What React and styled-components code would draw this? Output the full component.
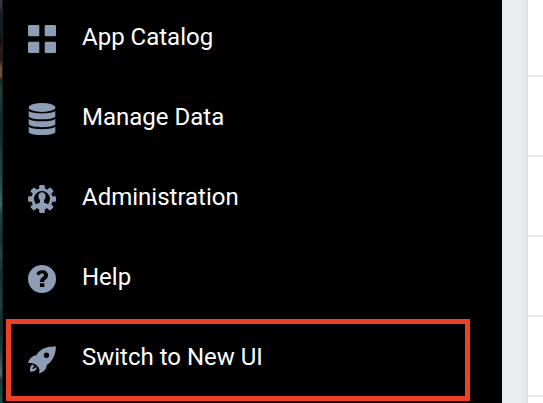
import React from "react";
import styled, { createGlobalStyle } from "styled-components";

const GlobalStyle = createGlobalStyle`
  body { margin: 0; overflow: hidden; background: #fff; }
  * { box-sizing: border-box; }
`;

const Screen = styled.div`
  display: grid;
  grid-template-columns: 3px 499px 26px 1fr;
  width: 543px;
  height: 403px;
  overflow: hidden;
`;

const Backdrop = styled.div`
  border-right: 1px solid #1c1f20;
  background: linear-gradient(
    180deg,
    #34363c 0, #34363c 5px, #101c28 14px, #141c24 32px, #100b0b 42px,
    #391a14 48px, #2a1410 60px, #6b4a36 67px, #70503a 76px, #16231f 80px,
    #1c4034 88px, #17373a 105px, #0d2731 125px, #122f3a 142px, #1b4646 165px,
    #1a4b44 180px, #3b6864 204px, #18463f 214px, #12343a 240px, #1a484a 256px,
    #102e34 276px, #194543 300px, #0d292b 326px, #153c3d 348px, #576b6c 374px,
    #143a3c 380px, #1b5452 403px
  );
`;

const Sidebar = styled.nav`
  display: flex;
  flex-direction: column;
  background: #000;
  overflow: hidden;
`;

const Label = styled.span`
  padding-bottom: 4px;
  white-space: nowrap;
`;

const MenuItem = styled.a`
  display: grid;
  grid-template-columns: 28px 1fr;
  column-gap: 26px;
  align-items: center;
  flex: 0 0 80px;
  padding-left: 25px;
  color: #fff;
  font: 400 24px/28px Roboto, sans-serif;

  &:first-child { margin-top: -1px; }
`;

const Highlighted = styled.div`
  display: flex;
  flex-direction: column;
  flex: 0 0 82px;
  width: 464px;
  margin-left: 3px;
  border: 5px solid #ec4127;

  ${MenuItem} {
    flex-basis: 72px;
    margin: 0;
    padding-left: 17px;
  }

  ${Label} {
    padding-bottom: 6px;
  }
`;

const Icon = styled.svg`
  display: block;
  width: 28px;
  height: 34px;
  fill: #8d9db5;
`;

const Gutter = styled.div`
  background: linear-gradient(90deg, #e9edf0 0, #e9edf0 18px, #e3e7ea 23px, #d9dde0 26px);
`;

const Table = styled.div`
  display: flex;
  flex-direction: column;
  margin-top: -3px;
  background: #fff;
`;

const TableRow = styled.div`
  flex: 0 0 80px;
  border-bottom: 2px solid #e9ecef;
`;

const CatalogIcon = () => (
  <Icon viewBox="0 -3 28 34">
    <rect width="11.3" height="11.3" rx="1.2" />
    <rect x="16.7" width="11.3" height="11.3" rx="1.2" />
    <rect y="16.7" width="11.3" height="11.3" rx="1.2" />
    <rect x="16.7" y="16.7" width="11.3" height="11.3" rx="1.2" />
  </Icon>
);

const layers = [6, 13.9, 21.8];

const DatabaseIcon = () => (
  <Icon viewBox="0 -3 28 34">
    <ellipse cx="14" cy="2.4" rx="13.3" ry="4.5" />
    {layers.map((y) => (
      <path
        key={y}
        d={`M.7 ${y}C4 ${y + 3.2} 24 ${y + 3.2} 27.3 ${y}V${y + 5.4}C24.5 ${y + 9.2} 3.5 ${y + 9.2} .7 ${y + 5.4}Z`}
      />
    ))}
  </Icon>
);

const teeth = [0, 45, 90, 135, 180, 225, 270, 315];

const AdminIcon = () => (
  <Icon viewBox="0 -3 28 34">
    {teeth.map((a) => (
      <path key={a} d="M11.2 5V1.2Q11.2 0 12.4 0h3.2q1.2 0 1.2 1.2V5Z" transform={`rotate(${a} 14 14)`} />
    ))}
    <path
      fillRule="evenodd"
      d="M14 3.3a10.7 10.7 0 1 0 0 21.4 10.7 10.7 0 0 0 0-21.4ZM12 15v2.6L7.9 19.2a8 8 0 1 1 12.2 0L16 17.6V15c2.9-2.3 1.8-7.7-2-7.7s-4.9 5.4-2 7.7Z"
    />
  </Icon>
);

const HelpIcon = () => (
  <Icon viewBox="0 -3 28 34">
    <path
      fillRule="evenodd"
      d="M14 0a14 14 0 1 0 0 28 14 14 0 0 0 0-28ZM8.2 8.7C9.8 6.3 11.7 5.3 14.3 5.3c3.3 0 5.7 2.1 5.7 5 0 2.4-1.2 3.5-2.5 4.5-.9.7-1.4 1-1.4 2v.3h-4v-.6c0-2.5 1.2-3.5 2.4-4.4 1-.7 1.4-1.1 1.4-1.9 0-1-.8-1.6-1.9-1.6-1.3 0-2 .6-3.1 1.8ZM11.9 18.3h4.4v3.8h-4.4Z"
    />
  </Icon>
);

const RocketIcon = () => (
  <Icon viewBox="0 -3 28 34">
    <path
      fillRule="evenodd"
      d="M28 .5C21.6.2 16.1 1.4 12.1 4.7c-1.6 1.3-2.8 2.8-3.8 4.6-2.5.3-4.2 1.1-5.5 2.8C1.4 13.7.3 15.4 0 17.2c2.1-.6 4.6-.2 6.7.7 1.7.9 3.2 2.4 4.1 4.1.9 1.8.9 3.6 0 5.4 2.2-.3 4-1.3 5.5-2.8 1.5-1.5 2.3-3 2.5-5.6 2.5-1.6 4.4-3.7 6-6.5C27 9 27.8 4.7 28 .5ZM18.5 6.5a2.7 2.7 0 1 0 0 5.4 2.7 2.7 0 0 0 0-5.4Z"
    />
    <path d="M4.3 18.4C2.2 19.6 1.7 22 2.1 25.8c3.5.1 5.8-.9 6.6-3.3l-1.2-1.5-1.3 1.5c-.5.6-1.2.7-1.8.7 0-.8.1-1.5.7-2l1.3-1.2Z" />
  </Icon>
);

const items = [
  { label: "App Catalog", Glyph: CatalogIcon },
  { label: "Manage Data", Glyph: DatabaseIcon },
  { label: "Administration", Glyph: AdminIcon },
  { label: "Help", Glyph: HelpIcon },
];

export default function App() {
  return (
    <>
      <GlobalStyle />
      <Screen>
        <Backdrop />
        <Sidebar>
          {items.map(({ label, Glyph }) => (
            <MenuItem key={label}>
              <Glyph />
              <Label>{label}</Label>
            </MenuItem>
          ))}
          <Highlighted>
            <MenuItem>
              <RocketIcon />
              <Label>Switch to New UI</Label>
            </MenuItem>
          </Highlighted>
        </Sidebar>
        <Gutter />
        <Table>
          {[0, 1, 2, 3, 4].map((row) => <TableRow key={row} />)}
        </Table>
      </Screen>
    </>
  );
}
